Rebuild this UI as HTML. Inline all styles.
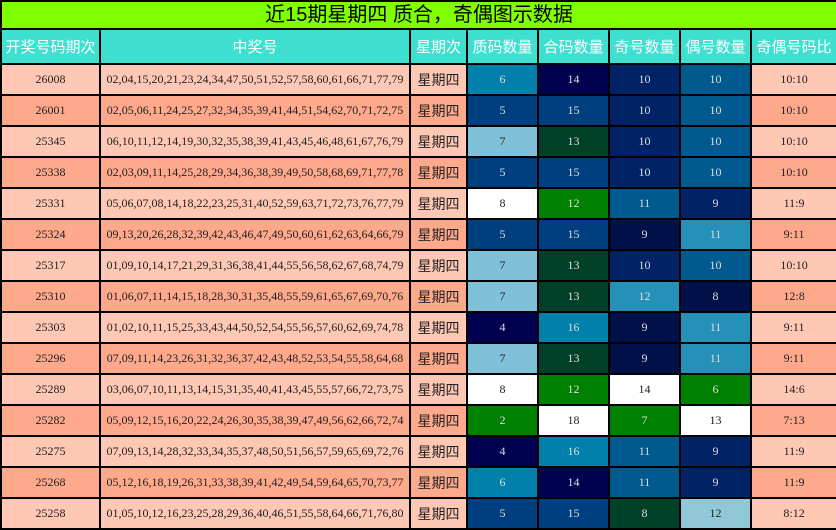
<!DOCTYPE html>
<html><head><meta charset="utf-8"><style>
body{margin:0;background:#fff;width:836px;height:530px;overflow:hidden}
table{border-collapse:collapse;table-layout:fixed;width:836px;font-family:"Liberation Serif","Noto Serif CJK SC",serif;font-size:12px}
td{border:2px solid #000;text-align:center;padding:0;height:29px;color:#222}
tr.t td{background:#7fff00;height:26px;font-family:"Liberation Sans","Noto Sans CJK SC",sans-serif;font-size:20px;color:#000;line-height:26px}
tr.h td{background:#40e0d0;height:33px;color:#fff;font-family:"Liberation Sans","Noto Sans CJK SC",sans-serif;font-size:15px}
tr.a td.b{background:#ffc8b4}
tr.c td.b{background:#ffa98c}
td.w{font-family:"Liberation Sans","Noto Sans CJK SC",sans-serif;font-size:14px}
.d{color:#ddd}
</style></head><body>
<table>
<colgroup><col style="width:99px"><col style="width:310px"><col style="width:57px"><col style="width:71px"><col style="width:71px"><col style="width:71px"><col style="width:71px"><col style="width:86px"></colgroup>
<tr class="t"><td colspan="8">近15期星期四 质合，奇偶图示数据</td></tr>
<tr class="h"><td>开奖号码期次</td><td>中奖号</td><td>星期次</td><td>质码数量</td><td>合码数量</td><td>奇号数量</td><td>偶号数量</td><td>奇偶号码比</td></tr>
<tr class="a"><td class="b">26008</td><td class="b">02,04,15,20,21,23,24,34,47,50,51,52,57,58,60,61,66,71,77,79</td><td class="b w">星期四</td><td class="d" style="background:#0080aa">6</td><td class="d" style="background:#000050">14</td><td class="d" style="background:#002266">10</td><td class="d" style="background:#005a90">10</td><td class="b">10:10</td></tr>
<tr class="c"><td class="b">26001</td><td class="b">02,05,06,11,24,25,27,32,34,35,39,41,44,51,54,62,70,71,72,75</td><td class="b w">星期四</td><td class="d" style="background:#003f7f">5</td><td class="d" style="background:#003f7f">15</td><td class="d" style="background:#002266">10</td><td class="d" style="background:#005a90">10</td><td class="b">10:10</td></tr>
<tr class="a"><td class="b">25345</td><td class="b">06,10,11,12,14,19,30,32,35,38,39,41,43,45,46,48,61,67,76,79</td><td class="b w">星期四</td><td style="background:#80c0d8">7</td><td class="d" style="background:#004028">13</td><td class="d" style="background:#002266">10</td><td class="d" style="background:#005a90">10</td><td class="b">10:10</td></tr>
<tr class="c"><td class="b">25338</td><td class="b">02,03,09,11,14,25,28,29,34,36,38,39,49,50,58,68,69,71,77,78</td><td class="b w">星期四</td><td class="d" style="background:#003f7f">5</td><td class="d" style="background:#003f7f">15</td><td class="d" style="background:#002266">10</td><td class="d" style="background:#005a90">10</td><td class="b">10:10</td></tr>
<tr class="a"><td class="b">25331</td><td class="b">05,06,07,08,14,18,22,23,25,31,40,52,59,63,71,72,73,76,77,79</td><td class="b w">星期四</td><td style="background:#fff">8</td><td class="d" style="background:#008000">12</td><td class="d" style="background:#005a90">11</td><td class="d" style="background:#002266">9</td><td class="b">11:9</td></tr>
<tr class="c"><td class="b">25324</td><td class="b">09,13,20,26,28,32,39,42,43,46,47,49,50,60,61,62,63,64,66,79</td><td class="b w">星期四</td><td class="d" style="background:#003f7f">5</td><td class="d" style="background:#003f7f">15</td><td class="d" style="background:#001048">9</td><td class="d" style="background:#2590b8">11</td><td class="b">9:11</td></tr>
<tr class="a"><td class="b">25317</td><td class="b">01,09,10,14,17,21,29,31,36,38,41,44,55,56,58,62,67,68,74,79</td><td class="b w">星期四</td><td style="background:#80c0d8">7</td><td class="d" style="background:#004028">13</td><td class="d" style="background:#002266">10</td><td class="d" style="background:#005a90">10</td><td class="b">10:10</td></tr>
<tr class="c"><td class="b">25310</td><td class="b">01,06,07,11,14,15,18,28,30,31,35,48,55,59,61,65,67,69,70,76</td><td class="b w">星期四</td><td style="background:#80c0d8">7</td><td class="d" style="background:#004028">13</td><td class="d" style="background:#2590b8">12</td><td class="d" style="background:#001048">8</td><td class="b">12:8</td></tr>
<tr class="a"><td class="b">25303</td><td class="b">01,02,10,11,15,25,33,43,44,50,52,54,55,56,57,60,62,69,74,78</td><td class="b w">星期四</td><td class="d" style="background:#000050">4</td><td class="d" style="background:#0080aa">16</td><td class="d" style="background:#001048">9</td><td class="d" style="background:#2590b8">11</td><td class="b">9:11</td></tr>
<tr class="c"><td class="b">25296</td><td class="b">07,09,11,14,23,26,31,32,36,37,42,43,48,52,53,54,55,58,64,68</td><td class="b w">星期四</td><td style="background:#80c0d8">7</td><td class="d" style="background:#004028">13</td><td class="d" style="background:#001048">9</td><td class="d" style="background:#2590b8">11</td><td class="b">9:11</td></tr>
<tr class="a"><td class="b">25289</td><td class="b">03,06,07,10,11,13,14,15,31,35,40,41,43,45,55,57,66,72,73,75</td><td class="b w">星期四</td><td style="background:#fff">8</td><td class="d" style="background:#008000">12</td><td style="background:#fff">14</td><td class="d" style="background:#008000">6</td><td class="b">14:6</td></tr>
<tr class="c"><td class="b">25282</td><td class="b">05,09,12,15,16,20,22,24,26,30,35,38,39,47,49,56,62,66,72,74</td><td class="b w">星期四</td><td class="d" style="background:#008000">2</td><td style="background:#fff">18</td><td class="d" style="background:#008000">7</td><td style="background:#fff">13</td><td class="b">7:13</td></tr>
<tr class="a"><td class="b">25275</td><td class="b">07,09,13,14,28,32,33,34,35,37,48,50,51,56,57,59,65,69,72,76</td><td class="b w">星期四</td><td class="d" style="background:#000050">4</td><td class="d" style="background:#0080aa">16</td><td class="d" style="background:#005a90">11</td><td class="d" style="background:#002266">9</td><td class="b">11:9</td></tr>
<tr class="c"><td class="b">25268</td><td class="b">05,12,16,18,19,26,31,33,38,39,41,42,49,54,59,64,65,70,73,77</td><td class="b w">星期四</td><td class="d" style="background:#0080aa">6</td><td class="d" style="background:#000050">14</td><td class="d" style="background:#005a90">11</td><td class="d" style="background:#002266">9</td><td class="b">11:9</td></tr>
<tr class="a"><td class="b">25258</td><td class="b">01,05,10,12,16,23,25,28,29,36,40,46,51,55,58,64,66,71,76,80</td><td class="b w">星期四</td><td class="d" style="background:#003f7f">5</td><td class="d" style="background:#003f7f">15</td><td class="d" style="background:#004028">8</td><td style="background:#90c8d8">12</td><td class="b">8:12</td></tr>
</table>
</body></html>
